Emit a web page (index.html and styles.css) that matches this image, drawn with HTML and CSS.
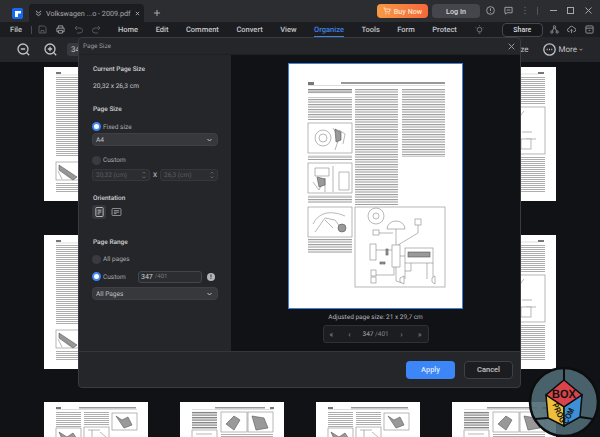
FILE: index.html
```html
<!DOCTYPE html>
<html lang="en">

<head>
	<meta charset="utf-8">
	<title>Page Size</title>
	<link rel="stylesheet" href="styles.css">
</head>

<body>
	<div class="app">
		<div class="titlebar">
			<span class="logo"><svg width="10" height="10" viewBox="0 0 10 10"><path d="M2 2h6v2.400H5V8H2z" fill="#fff"/></svg></span>
			<div class="tab">
				<svg class="tab-chev" width="7" height="7" viewBox="0 0 8 8"><path d="M1 1l3 2.500L7 1M1 4l3 2.500L7 4" class="ln"/></svg>
				<span class="tab-name">Volkswagen ...o - 2009.pdf</span>
				<svg class="tab-x" width="5" height="5" viewBox="0 0 6 6"><path d="M1 1l4 4M5 1L1 5" class="ln"/></svg>
			</div>
			<svg class="tab-plus" width="8" height="8" viewBox="0 0 9 9"><path d="M4.500 1v7M1 4.500h7" class="ln"/></svg>
			<button class="buy">
				<svg width="8" height="8" viewBox="0 0 9 9"><path d="M.5 1h1.300l1 4.500h4.400L8.300 2.300H2.300" class="ln"/><circle cx="3.200" cy="7.500" r=".7" fill="#ffe3cc"/><circle cx="6.700" cy="7.500" r=".7" fill="#ffe3cc"/></svg>
				Buy Now
			</button>
			<button class="login">Log In</button>
			<div class="win-icons">
				<svg width="9" height="9" viewBox="0 0 10 10"><circle cx="5" cy="5" r="4.300" class="ln"/><path d="M5 2.500v3M5 6.800v.8" class="ln"/></svg>
				<svg width="9" height="9" viewBox="0 0 10 10"><path d="M1 1.500h8v6H3.500L1.500 9V7.500H1z" class="ln"/><path d="M3 4.500h4" class="ln"/></svg>
				<svg class="dots" width="4" height="9" viewBox="0 0 4 10"><path d="M2 1v.8M2 4.600v.8M2 8.200V9" class="ln"/></svg>
				<span class="win-sep"></span>
				<svg width="7" height="7" viewBox="0 0 7 7"><path d="M0 3.500h7" class="ln"/></svg>
				<svg width="7" height="7" viewBox="0 0 7 7"><rect x=".5" y=".5" width="6" height="6" class="ln"/></svg>
				<svg width="7" height="7" viewBox="0 0 7 7"><path d="M.5.500l6 6M6.500.500l-6 6" class="ln"/></svg>
			</div>
		</div>

		<div class="menubar">
			<span class="file">File</span>
			<span class="menu-sep"></span>
			<div class="quick">
				<svg width="9" height="9" viewBox="0 0 9 9"><path d="M1 1h5.500L8 2.500V8H1zM3 8V5.500h3V8" class="ln"/></svg>
				<svg width="9" height="9" viewBox="0 0 10 10"><path d="M2.500 3.500V1h5v2.500M2.500 7.500H1v-4h8v4H7.500M2.800 6h4.400v3H2.800z" class="ln"/></svg>
				<svg width="9" height="9" viewBox="0 0 9 9"><path d="M3 1L1 3l2 2M1 3h5a2 2 0 010 5H3" class="ln"/></svg>
				<svg width="9" height="9" viewBox="0 0 9 9"><path d="M6 1l2 2-2 2M8 3H3a2 2 0 000 5h3" class="ln"/></svg>
			</div>
			<nav class="menu">
				<span>Home</span>
				<span>Edit</span>
				<span>Comment</span>
				<span>Convert</span>
				<span>View</span>
				<span class="active">Organize</span>
				<span>Tools</span>
				<span>Form</span>
				<span>Protect</span>
			</nav>
			<svg class="bulb" width="9" height="9" viewBox="0 0 10 10"><path d="M3.500 7.500C2.800 6.500 2.500 6 2.500 5a2.500 2.500 0 015 0c0 1-.3 1.500-1 2.500zM4 9h2M5 .2v.6M.7 3l.6.3M9.300 3l-.6.3" class="ln"/></svg>
			<button class="share">Share</button>
			<div class="menu-icons">
				<svg width="9" height="9" viewBox="0 0 10 10"><circle cx="5" cy="2" r="1.300" class="ln"/><circle cx="2" cy="7.800" r="1.300" class="ln"/><circle cx="8" cy="7.800" r="1.300" class="ln"/><path d="M4.300 3.200L2.700 6.600M5.700 3.200l1.600 3.400" class="ln"/></svg>
				<svg width="9" height="9" viewBox="0 0 10 10"><path d="M3 7.500H2.500a2 2 0 010-4 2.600 2.600 0 015-.4 2.200 2.200 0 010 4.400H7M5 9V5M3.700 6.200L5 5l1.300 1.200" class="ln"/></svg>
				<svg width="9" height="9" viewBox="0 0 10 10"><rect x="1" y="1" width="8" height="8" rx="1" class="ln"/><path d="M1 3.500h8M4 6h2" class="ln"/></svg>
			</div>
		</div>

		<div class="toolbar">
			<svg class="zoom-ic" width="13" height="13" viewBox="0 0 13 13"><circle cx="6" cy="6" r="5" class="ln-b"/><path d="M3.800 6h4.400M9.800 9.800l2.400 2.400" class="ln-b"/></svg>
			<svg class="zoom-ic" width="13" height="13" viewBox="0 0 13 13"><circle cx="6" cy="6" r="5" class="ln-b"/><path d="M3.800 6h4.400M6 3.800v4.400M9.800 9.800l2.400 2.400" class="ln-b"/></svg>
			<span class="zoom-box">347</span>
			<span class="tool-spacer"></span>
			<span class="tool-size">Resize</span>
			<svg class="more-ic" width="13" height="13" viewBox="0 0 13 13"><circle cx="6.500" cy="6.500" r="5.700" class="ln-b"/><path d="M3.700 6.500h1M6 6.500h1M8.300 6.500h1" class="ln-b"/></svg>
			<span class="more">More</span>
			<svg class="more-chev" width="4" height="3" viewBox="0 0 5 4"><path d="M.5 1l2 2 2-2" class="ln"/></svg>
		</div>

		<div class="canvas">
			<div class="thumb"><svg viewBox="0 0 104 134"><use href="#page-text"/></svg></div>
			<div class="thumb"><svg viewBox="0 0 104 134"><use href="#page-text"/></svg></div>
			<div class="thumb"><svg viewBox="0 0 104 134"><use href="#page-text"/></svg></div>
			<div class="thumb"><svg viewBox="0 0 104 134"><use href="#page-chart"/></svg></div>
			<div class="thumb"><svg viewBox="0 0 104 134"><use href="#page-text"/></svg></div>
			<div class="thumb"><svg viewBox="0 0 104 134"><use href="#page-text"/></svg></div>
			<div class="thumb"><svg viewBox="0 0 104 134"><use href="#page-text"/></svg></div>
			<div class="thumb"><svg viewBox="0 0 104 134"><use href="#page-chart"/></svg></div>
			<div class="thumb"><svg viewBox="0 0 104 134"><use href="#page-figs"/></svg></div>
			<div class="thumb"><svg viewBox="0 0 104 134"><use href="#page-figs2"/></svg></div>
			<div class="thumb"><svg viewBox="0 0 104 134"><use href="#page-figs"/></svg></div>
			<div class="thumb"><svg viewBox="0 0 104 134"><use href="#page-figs2"/></svg></div>
		</div>

		<div class="modal">
			<div class="modal-head">
				<span>Page Size</span>
				<svg width="7" height="7" viewBox="0 0 7 7"><path d="M.7.700l5.600 5.600M6.300.700L.7 6.300" class="ln"/></svg>
			</div>
			<div class="modal-body">
				<div class="options">
					<h3 class="opt-title first">Current Page Size</h3>
					<p class="opt-value">20,32 x 26,3 cm</p>
					<h3 class="opt-title">Page Size</h3>
					<label class="radio on">Fixed size</label>
					<div class="select">A4<svg width="5" height="4" viewBox="0 0 5 4"><path d="M.5 1l2 2 2-2" class="ln"/></svg></div>
					<label class="radio custom">Custom</label>
					<div class="size-row">
						<span class="spin">20,32 (cm)<svg width="4" height="8" viewBox="0 0 4 8"><path d="M.5 2.500L2 1l1.500 1.500M.5 5.500L2 7l1.500-1.500" class="ln"/></svg></span>
						<span class="size-x">X</span>
						<span class="spin">26,3 (cm)<svg width="4" height="8" viewBox="0 0 4 8"><path d="M.5 2.500L2 1l1.500 1.500M.5 5.500L2 7l1.500-1.500" class="ln"/></svg></span>
					</div>
					<h3 class="opt-title orient">Orientation</h3>
					<div class="orient-row">
						<span class="orient-btn on"><svg width="9" height="10" viewBox="0 0 9 11"><rect x=".5" y=".5" width="8" height="10" rx="1" class="ln"/><path d="M2.500 3.500h4M2.500 5.500h4M2.500 7.500h2" class="ln"/></svg></span>
						<span class="orient-btn"><svg width="11" height="8" viewBox="0 0 11 9"><rect x=".5" y=".5" width="10" height="8" rx="1" class="ln"/><path d="M2.500 3h6M2.500 4.700h6M2.500 6.300h3" class="ln"/></svg></span>
					</div>
					<h3 class="opt-title range">Page Range</h3>
					<label class="radio all">All pages</label>
					<div class="range-row">
						<label class="radio on">Custom</label>
						<span class="range-input">347<em>/401</em></span>
						<span class="info">!</span>
					</div>
					<div class="select">All Pages<svg width="5" height="4" viewBox="0 0 5 4"><path d="M.5 1l2 2 2-2" class="ln"/></svg></div>
				</div>
				<div class="preview">
					<div class="sheet">
						<svg width="173" height="244" viewBox="0 0 173 244">
							<rect x="19" y="18" width="6" height="3" fill="#777"/>
							<rect x="52" y="18" width="104" height="2" fill="#999"/>
							<path d="M19 21.500h137" stroke="#bbb" stroke-width=".5"/>
							<rect x="19" y="25" width="44" height="5" fill="url(#heavy)"/>
							<rect x="19" y="33" width="44" height="23" fill="url(#text)"/>
							<g class="fig"><rect x="19" y="59" width="44" height="30"/><circle cx="34" cy="74" r="8"/><circle cx="34" cy="74" r="4"/><path d="M44 64l6 10-4 12M50 66l6 4-2 10"/><path d="M46 65l6 3v8l-5 2z" class="fig-dark"/></g>
							<rect x="19" y="91" width="44" height="5" fill="url(#text)"/>
							<g class="fig"><rect x="19" y="99" width="44" height="30"/><path d="M26 104h14v8H26zM24 118l6 8 6-12v14M44 102v26M50 108h10v18H50z"/><path d="M28 113l8 2v6l-6 2z" class="fig-dark"/></g>
							<rect x="19" y="131" width="44" height="8" fill="url(#text)"/>
							<g class="fig"><rect x="19" y="143" width="44" height="30"/><path d="M24 160c6-12 18-14 32-8M26 168l10-14 10 2 6 8M36 156l8 8"/><circle cx="53" cy="164" r="4" class="fig-dark"/></g>
							<rect x="19" y="174" width="44" height="15" fill="url(#text)"/>
							<rect x="66" y="25" width="43" height="116" fill="url(#text)"/>
							<rect x="113" y="25" width="43" height="68" fill="url(#text)"/>
							<g class="fig">
								<rect x="66" y="143" width="90" height="80"/>
								<path d="M90 169h14M107 165v16M129 161v8l-20 12M87 186h16M107 203v14l6 2M105 203v8h-18M111 192h5M122 199v8h-6M138 199v16M87 209h-2M116 199v16M144 199v14"/>
								<circle cx="87" cy="152" r="8"/><circle cx="87" cy="152" r="3"/>
								<path d="M98 165a9 8 0 0118 0z"/>
								<rect x="126" y="155" width="6" height="6"/>
								<rect x="84" y="166" width="6" height="5"/>
								<rect x="103" y="181" width="8" height="22"/>
								<rect x="116" y="184" width="28" height="15"/>
								<rect x="119" y="188" width="22" height="5" class="fig-dark"/>
								<rect x="81" y="180" width="6" height="16"/>
								<rect x="97" y="185" width="2" height="6" class="fig-dark"/>
								<rect x="91" y="198" width="5" height="2" class="fig-dark"/>
								<rect x="82" y="206" width="5" height="6"/>
								<rect x="82" y="213" width="5" height="6"/>
								<path d="M111 214l4-2v8l-4-2zM146 212l-3 2v4l3 2z"/>
							</g>
						</svg>
					</div>
					<p class="adjusted">Adjusted page size: 21 x 29,7 cm</p>
					<div class="pager">
						<span class="pg">«</span>
						<span class="pg">‹</span>
						<span class="pg-num">347 <em>/401</em></span>
						<span class="pg">›</span>
						<span class="pg">»</span>
					</div>
				</div>
			</div>
			<div class="modal-foot">
				<button class="apply">Apply</button>
				<button class="cancel">Cancel</button>
			</div>
		</div>

		<svg class="badge" width="72" height="72" viewBox="-36 -36 72 72">
			<circle r="34" fill="#4f6a73" fill-opacity=".9" stroke="#0c0d0f" stroke-width="2.500"/>
			<path d="M0-34V-22M-29 17l13-1M29 17l-13-2" stroke="#0c0d0f" stroke-width="2"/>
			<path d="M0-22L18-7 0 5-18-7z" fill="#d9434a" stroke="#0c0d0f" stroke-width="1.500"/>
			<path d="M-18-7L0 5V24L-16 16z" fill="#eebf3a" stroke="#0c0d0f" stroke-width="1.500"/>
			<path d="M18-7L0 5V24L16 15z" fill="#3d8fd6" stroke="#0c0d0f" stroke-width="1.500"/>
			<text transform="translate(0 -4) scale(1.100 1.200)">BOX</text>
			<text transform="translate(-7.500 12) rotate(65) scale(.7 .85)">PROG</text>
			<text transform="translate(7 15) rotate(-65) scale(.7 .85)">COM</text>
		</svg>
	</div>

	<svg class="defs" width="0" height="0">
		<defs>
			<pattern id="text" width="8" height="2.500" patternUnits="userSpaceOnUse">
				<rect width="8" height="1.100" fill="#999"/>
			</pattern>
			<pattern id="tiny" width="6" height="2" patternUnits="userSpaceOnUse">
				<rect width="6" height=".9" fill="#a5a5a5"/>
			</pattern>
			<pattern id="heavy" width="8" height="2.500" patternUnits="userSpaceOnUse">
				<rect width="8" height="1.300" fill="#808080"/>
			</pattern>
			<symbol id="page-text" viewBox="0 0 104 134">
				<rect x="12" y="5" width="5" height="2" fill="#777"/>
				<path d="M12 8h80" stroke="#bbb" stroke-width=".5"/>
				<rect x="12" y="10" width="80" height="80" fill="url(#tiny)"/>
				<g class="fig"><rect x="12" y="95" width="24" height="18"/><path d="M15 98l18 12-4 3-14-10z" class="fig-dark"/><path d="M14 104l4 8M18 102l10 10"/></g>
				<rect x="12" y="115" width="80" height="11" fill="url(#tiny)"/>
			</symbol>
			<symbol id="page-chart" viewBox="0 0 104 134">
				<rect x="86" y="5" width="6" height="2" fill="#777"/>
				<path d="M12 7h74" stroke="#bbb" stroke-width=".5"/>
				<rect x="12" y="9" width="81" height="28" fill="url(#tiny)"/>
				<g class="fig"><rect x="12" y="40" width="81" height="47"/><path d="M72 44l-6 8M68 55v8M70 65H80M74 72h10"/><rect x="69" y="72" width="10" height="10" fill="#bbb"/></g>
				<rect x="12" y="89" width="81" height="36" fill="url(#tiny)"/>
			</symbol>
			<symbol id="page-figs" viewBox="0 0 104 134">
				<rect x="12" y="5" width="5" height="2" fill="#777"/>
				<rect x="35" y="5" width="57" height="1.500" fill="#999"/>
				<path d="M12 7.500h81" stroke="#bbb" stroke-width=".5"/>
				<rect x="12" y="9" width="25" height="16" fill="url(#tiny)"/>
				<rect x="40" y="9" width="25" height="14" fill="url(#tiny)"/>
				<g class="fig"><rect x="68" y="11" width="25" height="17"/><path d="M72 14l6 4 6-3 4 8-8 3z" class="fig-dark"/></g>
				<g class="fig"><rect x="12" y="26" width="25" height="14"/><path d="M15 30l8 5 6-4 4 6-14 2z" class="fig-dark"/></g>
				<g class="fig"><rect x="40" y="25" width="25" height="14"/><path d="M44 28h12M48 28v8M56 30l6 5"/></g>
			</symbol>
			<symbol id="page-figs2" viewBox="0 0 104 134">
				<rect x="35" y="5" width="50" height="1.500" fill="#999"/>
				<rect x="90" y="5" width="4" height="2" fill="#777"/>
				<path d="M12 7.500h81" stroke="#bbb" stroke-width=".5"/>
				<rect x="12" y="9" width="25" height="18" fill="url(#heavy)"/>
				<g class="fig"><rect x="41" y="10" width="26" height="20"/><path d="M46 22l8-8 6 4-6 10z" class="fig-dark"/></g>
				<g class="fig"><rect x="68" y="10" width="25" height="20"/><path d="M72 14l12 2 4 10-12 2z" class="fig-dark"/></g>
				<g class="fig"><rect x="12" y="28" width="25" height="12"/><path d="M16 32h16M16 36h16"/></g>
				<rect x="41" y="32" width="52" height="6" fill="url(#tiny)"/>
			</symbol>
		</defs>
	</svg>
</body>
</html>
```

FILE: styles.css
```css
*,
*::before {
	box-sizing: border-box;
}

html,
body {
	margin: 0;
	height: 437px;
	overflow: hidden;
	background: #111215;
}

body {
	font-family: 'Roboto', 'Liberation Sans', sans-serif;
	font-size: 6.500px;
	color: #d4d5d8;
	text-rendering: geometricPrecision;
}

button {
	font: inherit;
	border: 0;
	padding: 0;
}

svg {
	display: block;
	flex: none;
}

.ln {
	fill: none;
	stroke: currentColor;
	stroke-width: 1;
}

.ln-b {
	fill: none;
	stroke: currentColor;
	stroke-width: 1.300;
}

.defs {
	overflow: hidden;
}

.app {
	position: relative;
	width: 600px;
	height: 437px;
	overflow: hidden;
	display: flex;
	flex-direction: column;
}

/* title bar */
.titlebar {
	height: 22px;
	flex: none;
	display: flex;
	align-items: flex-start;
	background: #2c2d31;
	color: #b8b9bc;
}

.logo {
	width: 11px;
	height: 11px;
	margin: 8px 0 0 12px;
	background: #1569f2;
	border-radius: 2px;
	display: flex;
	align-items: center;
	justify-content: center;
}

.tab {
	width: 115px;
	height: 18px;
	margin: 4px 0 0 6px;
	padding: 0 8px 0 6px;
	background: #1c1d21;
	border-radius: 4px 4px 0 0;
	display: flex;
	align-items: center;
	gap: 4px;
}

.tab-name {
	flex: 1;
	font-size: 7.200px;
	white-space: nowrap;
	color: #a9aaae;
}

.tab-plus {
	margin: 9px 0 0 9px;
}

.buy {
	width: 51px;
	height: 14px;
	margin: 4px 0 0 216px;
	border-radius: 4px;
	background: linear-gradient(90deg, #f79a45, #f4683a);
	color: #ffe3cc;
	font-size: 7.200px;
	font-weight: 500;
	display: flex;
	align-items: center;
	justify-content: center;
	gap: 3px;
}

.login {
	width: 48px;
	height: 14px;
	margin: 4px 0 0 4px;
	border-radius: 4px;
	background: #45464b;
	color: #d8d9db;
	font-size: 7.200px;
	font-weight: 500;
}

.win-icons {
	margin: 6px 0 0 6px;
	display: flex;
	align-items: center;
	color: #a6a7aa;
}

.win-icons svg:nth-child(2) {
	margin-left: 9px;
}

.dots {
	margin-left: 10px;
}

.win-sep {
	width: 1px;
	height: 8px;
	margin: 0 12px 0 10px;
	background: #54555a;
}

.win-icons svg:nth-child(5) {
	margin-right: 10px;
}

.win-icons svg:nth-child(6) {
	margin-right: 11px;
}

/* menu row */
.menubar {
	height: 15px;
	flex: none;
	display: flex;
	align-items: center;
	background: #1c1d21;
	color: #c4c5c8;
	font-weight: 500;
}

.file {
	margin-left: 10px;
	width: 21px;
	flex: none;
	font-size: 7.500px;
}

.menu-sep {
	width: 1px;
	height: 8px;
	flex: none;
	background: #4a4b50;
}

.quick {
	margin-left: 6px;
	width: 80px;
	flex: none;
	display: flex;
	gap: 9px;
	color: #55565b;
}

.quick svg:nth-child(2) {
	color: #a2a3a6;
}

.menu {
	display: flex;
	flex: none;
	gap: 17.500px;
	height: 15px;
	align-items: center;
	font-size: 7.500px;
}

.menu .active {
	height: 15px;
	line-height: 15px;
	color: #3f82e4;
	border-bottom: 1px solid #3f82e4;
}

.bulb {
	margin-left: 18px;
	color: #7f8084;
}

.share {
	width: 41px;
	height: 14px;
	flex: none;
	margin-left: 18px;
	background: #17181b;
	border: 1px solid #46474b;
	border-radius: 4px;
	color: #d8d9db;
	font-size: 7px;
	font-weight: 500;
}

.menu-icons {
	margin-left: 7px;
	display: flex;
	gap: 8.500px;
	color: #96979a;
}

/* tool row */
.toolbar {
	height: 25px;
	flex: none;
	padding-left: 17px;
	display: flex;
	align-items: center;
	background: #25262a;
	color: #c2c3c6;
}

.zoom-ic + .zoom-ic {
	margin-left: 14px;
}

.zoom-box {
	margin-left: 10px;
	padding: 2px 4px;
	background: #38393d;
	border-radius: 3px;
	font-size: 8px;
}

.tool-spacer {
	flex: 1;
}

.tool-size {
	font-size: 8px;
	margin-right: 14px;
}

.more {
	margin: 0 2px 0 3px;
	font-size: 8px;
}

.more-chev {
	margin-right: 17px;
}

/* page thumbnails behind the dialog */
.canvas {
	flex: 1;
	padding: 5px 0 0 44px;
	display: grid;
	grid-template-columns: repeat(4, 104px);
	grid-auto-rows: 134px;
	column-gap: 32px;
	row-gap: 33.500px;
	background: #111215;
}

.thumb {
	background: #fff;
}

.thumb svg {
	width: 104px;
	height: 134px;
	filter: blur(.5px);
}

.fig rect,
.fig path,
.fig circle {
	fill: #fff;
	stroke: #888;
	stroke-width: .6;
}

.fig .fig-dark {
	fill: #999;
	stroke: #555;
}

/* dialog */
.modal {
	position: absolute;
	left: 78px;
	top: 37px;
	width: 443px;
	height: 351px;
	display: flex;
	flex-direction: column;
	background: #25262a;
	border: 1px solid #3a3b40;
	border-radius: 4px;
}

.modal-head {
	height: 17px;
	flex: none;
	padding: 0 5px 0 4px;
	display: flex;
	align-items: center;
	justify-content: space-between;
	border-bottom: 1px solid #1f2023;
	font-size: 6.400px;
	color: #9a9b9f;
}

.modal-body {
	flex: 1;
	display: flex;
	min-height: 0;
}

.options {
	width: 152px;
	flex: none;
	padding: 0 13px;
	display: flex;
	flex-direction: column;
	align-items: flex-start;
}

.opt-title {
	margin: 12px 0 0;
	font-size: 6.500px;
	line-height: 11px;
	font-weight: 500;
	color: #cfd0d3;
	padding-left: 1px;
}

.opt-title.first {
	margin-top: 9px;
}

.opt-title.orient {
	margin-top: 12px;
}

.opt-title.range {
	margin-top: 18px;
}

.opt-value {
	margin: 6px 0 0;
	padding-left: 1px;
	font-size: 6.600px;
	line-height: 11px;
	color: #c6c7ca;
}

.radio {
	margin-top: 6px;
	display: flex;
	align-items: center;
	gap: 2px;
	height: 11px;
	font-size: 6.500px;
	color: #aaabae;
}

.radio::before {
	content: "";
	flex: none;
	width: 9px;
	height: 9px;
	border-radius: 50%;
	background: #3a3b40;
}

.radio.on::before {
	background: #fff;
	border: 2.500px solid #3d86f5;
}

.radio.custom {
	margin-top: 8.500px;
}

.radio.all {
	margin-top: 6px;
}

.select {
	width: 126px;
	height: 13px;
	margin-top: 1px;
	padding: 0 5px 0 3px;
	display: flex;
	align-items: center;
	justify-content: space-between;
	background: #37383c;
	border: 1px solid #3f4045;
	border-radius: 4px;
	font-size: 6.600px;
	color: #bfc0c3;
}

.size-row {
	width: 126px;
	margin-top: 3px;
	display: flex;
	align-items: center;
	justify-content: space-between;
}

.spin {
	width: 58px;
	height: 12px;
	padding: 0 3px;
	display: flex;
	align-items: center;
	justify-content: space-between;
	background: #2c2d31;
	border: 1px solid #36373b;
	border-radius: 3px;
	font-size: 6.500px;
	color: #5c5d61;
}

.size-x {
	font-size: 6.500px;
	font-weight: 600;
	color: #aaabae;
}

.orient-row {
	margin-top: 1px;
	display: flex;
	align-items: center;
	gap: 3px;
	color: #9d9ea2;
}

.orient-btn {
	width: 14px;
	height: 14px;
	display: flex;
	align-items: center;
	justify-content: center;
	border-radius: 3px;
}

.orient-btn.on {
	background: #36373b;
	color: #c5c6c9;
}

.range-row {
	width: 126px;
	margin-top: 6px;
	display: flex;
	align-items: center;
}

.range-row .radio {
	margin: 0;
	width: 46px;
}

.range-input {
	width: 64px;
	height: 12px;
	padding-left: 2px;
	display: flex;
	align-items: center;
	gap: 2px;
	background: #2c2d31;
	border: 1px solid #45464b;
	border-radius: 3px;
	font-size: 7px;
	color: #cfd0d3;
}

.range-input em {
	font-style: normal;
	font-size: 6px;
	color: #77787c;
}

.info {
	width: 8px;
	height: 8px;
	margin-left: 5px;
	border-radius: 50%;
	background: #b5b6ba;
	color: #25262a;
	font-size: 6.500px;
	font-weight: 700;
	line-height: 8px;
	text-align: center;
}

.range-row + .select {
	margin-top: 4.500px;
}

.preview {
	flex: 1;
	padding-top: 9px;
	display: flex;
	flex-direction: column;
	align-items: center;
	background: #111215;
}

.sheet {
	width: 173px;
	height: 244px;
	flex: none;
	background: #fff;
	outline: 1px solid #3d80dd;
}

.sheet svg {
	filter: blur(.5px);
}

.adjusted {
	margin: 4px 0 0;
	line-height: 11px;
	font-size: 6.500px;
	color: #b3b4b7;
}

.pager {
	width: 106px;
	height: 18px;
	margin-top: 2px;
	display: flex;
	align-items: center;
	justify-content: space-between;
	padding: 0 3px;
	background: #1c1d20;
	border: 1px solid #303135;
	border-radius: 3px;
	font-size: 6.500px;
	color: #85868a;
}

.pg {
	width: 10px;
	font-size: 8px;
	text-align: center;
}

.pg-num {
	color: #b0b1b4;
	width: 26px;
	text-align: center;
	white-space: nowrap;
}

.pg-num em {
	font-style: normal;
	color: #85868a;
}

.modal-foot {
	height: 36px;
	flex: none;
	padding-right: 7px;
	display: flex;
	align-items: center;
	justify-content: flex-end;
	gap: 9px;
	border-top: 1px solid #35363a;
}

.apply,
.cancel {
	width: 49px;
	height: 18px;
	border-radius: 4px;
	font-size: 7.500px;
	font-weight: 500;
}

.apply {
	background: #3c86f7;
	color: #dbe8fd;
}

.cancel {
	background: #1c1d20;
	border: 1px solid #404145;
	color: #c4c5c8;
}

/* watermark */
.badge {
	position: absolute;
	left: 528px;
	top: 366px;
}

.badge text {
	font-family: 'Liberation Sans', sans-serif;
	font-size: 10px;
	font-weight: 700;
	fill: #111;
	text-anchor: middle;
}
```
